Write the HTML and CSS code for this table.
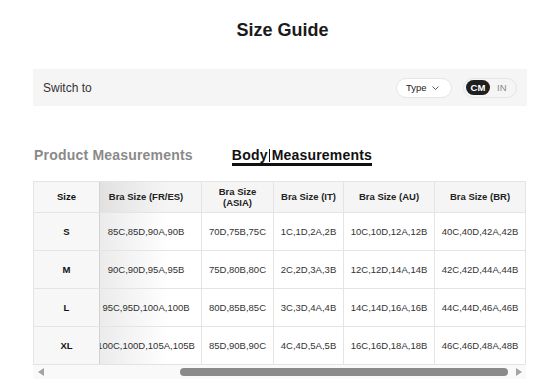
FILE: index.html
```html
<!DOCTYPE html>
<html lang="en">
<head>
    <meta charset="UTF-8">
    <meta name="viewport" content="width=device-width, initial-scale=1.0">
    <link rel="stylesheet" href="styles.css">
    <title>Size Guide</title>
</head>
<body>
    <div class="wrap">
        <!-- heading -->
        <h1 class="ttl">Size Guide</h1>

        <!-- switch bar -->
        <div class="bar">
            <span class="bar-lbl">Switch to</span>
            <div class="ctrls">
                <button class="typ">Type
                    <svg width="7" height="4" viewBox="0 0 7 4"><polyline points="0.5,0.5 3.5,3.5 6.5,0.5" fill="none" stroke="#444" stroke-width="0.9"/></svg>
                </button>
                <div class="unit">
                    <span class="on">CM</span>
                    <span class="off">IN</span>
                </div>
            </div>
        </div>

        <!-- tabs -->
        <div class="tabs">
            <span class="tab">Product Measurements</span>
            <span class="tab act">Body<i class="caret"></i>Measurements</span>
        </div>

        <!-- table -->
        <div class="tblwrap" id="tw">
            <table class="tbl">
                <colgroup>
                    <col style="width:67px">
                    <col style="width:111px">
                    <col style="width:72px">
                    <col style="width:70px">
                    <col style="width:91px">
                    <col style="width:91px">
                </colgroup>
                <thead>
                    <tr>
                        <th>Size</th>
                        <th>Bra Size (FR/ES)</th>
                        <th>Bra Size (ASIA)</th>
                        <th>Bra Size (IT)</th>
                        <th>Bra Size (AU)</th>
                        <th>Bra Size (BR)</th>
                    </tr>
                </thead>
                <tbody>
                    <tr>
                        <td>S</td>
                        <td>85C,85D,90A,90B</td>
                        <td>70D,75B,75C</td>
                        <td>1C,1D,2A,2B</td>
                        <td>10C,10D,12A,12B</td>
                        <td>40C,40D,42A,42B</td>
                    </tr>
                    <tr>
                        <td>M</td>
                        <td>90C,90D,95A,95B</td>
                        <td>75D,80B,80C</td>
                        <td>2C,2D,3A,3B</td>
                        <td>12C,12D,14A,14B</td>
                        <td>42C,42D,44A,44B</td>
                    </tr>
                    <tr>
                        <td>L</td>
                        <td>95C,95D,100A,100B</td>
                        <td>80D,85B,85C</td>
                        <td>3C,3D,4A,4B</td>
                        <td>14C,14D,16A,16B</td>
                        <td>44C,44D,46A,46B</td>
                    </tr>
                    <tr>
                        <td>XL</td>
                        <td>100C,100D,105A,105B</td>
                        <td>85D,90B,90C</td>
                        <td>4C,4D,5A,5B</td>
                        <td>16C,16D,18A,18B</td>
                        <td>46C,46D,48A,48B</td>
                    </tr>
                </tbody>
            </table>
        </div>

        <!-- scrollbar -->
        <div class="sbar">
            <i class="arr-l"></i>
            <div class="trk"><div class="thumb"></div></div>
            <i class="arr-r"></i>
        </div>
    </div>
    <script>
        // scroll table to the end
        var tw = document.getElementById('tw');
        tw.scrollLeft = tw.scrollWidth;
    </script>
</body>
</html>
```
FILE: styles.css
```css
*{
    box-sizing: border-box;
}
body{
    margin: 0;
    font-family: "Liberation Sans", Arial, sans-serif;
    color: #222;
    background: #fff;
}
.wrap{
    padding: 0 19px 0 33px;
}
.ttl{
    margin: 20px 0 0;
    padding-left: 5px;
    font-size: 18px;
    line-height: 20px;
    text-align: center;
    font-weight: bold;
    color: #1a1a1a;
}
.bar{
    margin-top: 29px;
    height: 37px;
    background: #f5f5f5;
    display: flex;
    align-items: center;
    justify-content: space-between;
    padding: 0 10px;
}
.bar-lbl{
    font-size: 12px;
    color: #333;
}
.ctrls{
    display: flex;
    align-items: center;
    gap: 11px;
}
.typ{
    display: flex;
    align-items: center;
    gap: 5px;
    width: 56px;
    height: 20px;
    padding: 0 0 0 9px;
    border: 1px solid #e6e6e6;
    border-radius: 10px;
    background: #fff;
    font-family: inherit;
    font-size: 9.5px;
    color: #222;
}
.unit{
    display: flex;
    align-items: center;
    width: 54px;
    height: 20px;
    padding: 0 1px 0 2px;
    border: 1px solid #e6e6e6;
    border-radius: 10px;
}
.unit .on{
    width: 24px;
    height: 15px;
    line-height: 15px;
    text-align: center;
    border-radius: 8px;
    background: #1f1f1f;
    color: #fff;
    font-weight: bold;
    font-size: 9.5px;
}
.unit .off{
    margin-left: 7px;
    font-size: 9.5px;
    color: #888;
}
.tabs{
    display: flex;
    align-items: flex-start;
    gap: 39px;
    margin-top: 41px;
    padding-left: 1px;
}
.tab{
    font-size: 14px;
    font-weight: bold;
    line-height: 16px;
    letter-spacing: 0.2px;
    color: #8a8a8a;
}
.tab.act{
    color: #111;
    border-bottom: 3px solid #111;
}
.caret{
    display: inline-block;
    width: 1px;
    height: 13px;
    margin: 0 2px 0 1px;
    background: #111;
    vertical-align: -2px;
}
.tblwrap{
    margin-top: 15px;
    width: 493px;
    overflow-x: auto;
    scrollbar-width: none;
}
.tblwrap::-webkit-scrollbar{display: none;}
.tbl{
    border-collapse: separate;
    border-spacing: 0;
    table-layout: fixed;
    width: 502px;
    font-size: 9.5px;
}
.tbl th, .tbl td{
    border-right: 1px solid #e4e4e4;
    border-bottom: 1px solid #e4e4e4;
    text-align: center;
    white-space: nowrap;
    padding: 0 4px;
    color: #333;
}
.tbl th{
    height: 32px;
    line-height: 11.5px;
    white-space: normal;
    border-top: 1px solid #e4e4e4;
    background: #f5f5f5;
    font-weight: bold;
    color: #222;
}
.tbl td{
    height: 38px;
}
.tbl th:first-child, .tbl td:first-child{
    position: sticky;
    left: 0;
    z-index: 1;
    border-left: 1px solid #e4e4e4;
    background: #f7f7f7;
    font-weight: bold;
    color: #111;
}
.tbl th:first-child::after, .tbl td:first-child::after{
    content: "";
    position: absolute;
    top: 0;
    bottom: 0;
    left: 100%;
    width: 70px;
    background: linear-gradient(to right, rgba(0, 0, 0, 0.08), rgba(0, 0, 0, 0));
    pointer-events: none;
}
.sbar{
    display: flex;
    align-items: center;
    width: 493px;
    height: 14px;
    padding: 0 4px 0 5px;
    background: #f9f9f9;
}
.arr-l{
    width: 0;
    height: 0;
    border-top: 4px solid transparent;
    border-bottom: 4px solid transparent;
    border-right: 6px solid #a3a3a3;
}
.arr-r{
    width: 0;
    height: 0;
    border-top: 4px solid transparent;
    border-bottom: 4px solid transparent;
    border-left: 6px solid #a3a3a3;
}
.trk{
    flex: 1;
    display: flex;
}
.thumb{
    flex: 1;
    height: 8px;
    margin: 0 8px 0 136px;
    border-radius: 4px;
    background: #8a8a8a;
}
```
